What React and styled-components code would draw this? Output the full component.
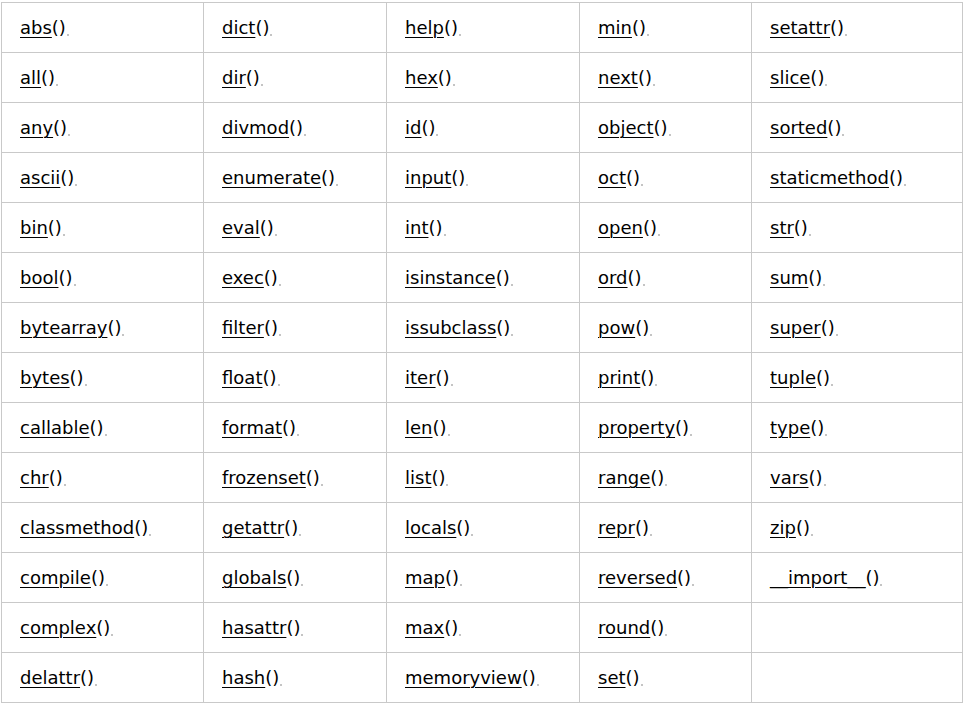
import React from "react";
import styled, { createGlobalStyle } from "styled-components";

const columns = [
  ["abs", "all", "any", "ascii", "bin", "bool", "bytearray", "bytes", "callable", "chr", "classmethod", "compile", "complex", "delattr"],
  ["dict", "dir", "divmod", "enumerate", "eval", "exec", "filter", "float", "format", "frozenset", "getattr", "globals", "hasattr", "hash"],
  ["help", "hex", "id", "input", "int", "isinstance", "issubclass", "iter", "len", "list", "locals", "map", "max", "memoryview"],
  ["min", "next", "object", "oct", "open", "ord", "pow", "print", "property", "range", "repr", "reversed", "round", "set"],
  ["setattr", "slice", "sorted", "staticmethod", "str", "sum", "super", "tuple", "type", "vars", "zip", "__import__", "", ""],
];

const widths = [202, 183, 193, 172, 211];

const GlobalStyle = createGlobalStyle`
  body {
    margin: 2px 0 0 1px;
    background: #fff;
    font-family: "DejaVu Sans", Verdana, sans-serif;
  }
`;

const Grid = styled.div`
  display: grid;
  grid-template-columns: ${widths.map((w) => w + "px").join(" ")};
  grid-auto-rows: 50px;
  width: max-content;
  border-top: 1px solid #c9c9c9;
  border-left: 1px solid #c9c9c9;
`;

const Cell = styled.div`
  box-sizing: border-box;
  display: flex;
  align-items: center;
  padding: 0 0 0 18px;
  border-right: 1px solid #c9c9c9;
  border-bottom: 1px solid #c9c9c9;
  font-size: 18px;
  color: #000;
  white-space: nowrap;
`;

const Name = styled.a`
  color: #000;
  text-decoration: underline;
  text-decoration-thickness: 1px;
  text-underline-offset: 3px;
`;

const Parens = styled.span`
  color: #000;
`;

const Dot = styled.span`
  display: inline-block;
  width: 2px;
  height: 2px;
  margin-left: 1px;
  margin-top: 14px;
  background: #c4c4c4;
`;

const App = () => {
  const rows = columns[0].map((_, r) => columns.map((col) => col[r]));
  return (
    <>
      <GlobalStyle />
      <Grid>
        {rows.map((row, r) =>
          row.map((name, c) => (
            <Cell key={r + "-" + c}>
              {name && (
                <>
                  <Name>{name}</Name>
                  <Parens>()</Parens>
                  <Dot />
                </>
              )}
            </Cell>
          ))
        )}
      </Grid>
    </>
  );
};

export default App;
